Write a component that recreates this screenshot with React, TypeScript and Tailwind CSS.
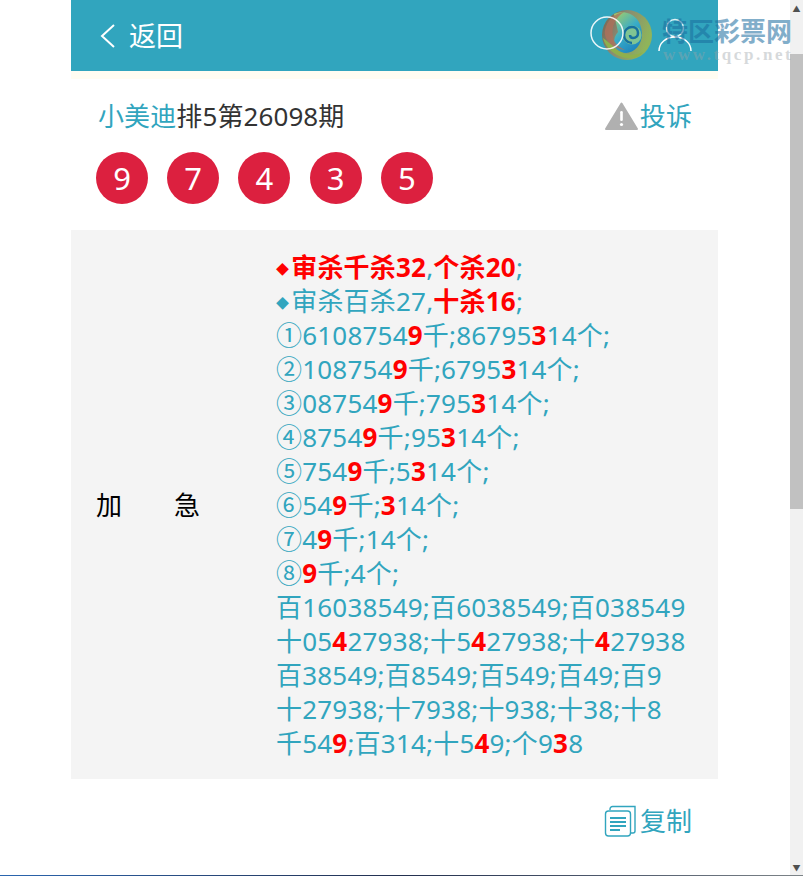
const font = { fontFamily: '"Noto Sans", "Noto Sans CJK SC", sans-serif' };

const R = ({ children }: { children: React.ReactNode }) => (
  <b className="font-bold text-[#ff0000]">{children}</b>
);

const lines: React.ReactNode[] = [
  <>
    <span className="text-[#ff0000] text-[13px] align-[3px] mr-[2px]">◆</span>
    <R>审杀千杀32</R>,<R>个杀20</R>;
  </>,
  <>
    <span className="text-[13px] align-[3px] mr-[2px]">◆</span>审杀百杀27,<R>十杀16</R>;
  </>,
  <>①6108754<R>9</R>千;86795<R>3</R>14个;</>,
  <>②108754<R>9</R>千;6795<R>3</R>14个;</>,
  <>③08754<R>9</R>千;795<R>3</R>14个;</>,
  <>④8754<R>9</R>千;95<R>3</R>14个;</>,
  <>⑤754<R>9</R>千;5<R>3</R>14个;</>,
  <>⑥54<R>9</R>千;<R>3</R>14个;</>,
  <>⑦4<R>9</R>千;14个;</>,
  <>⑧<R>9</R>千;4个;</>,
  <>百16038549;百6038549;百038549</>,
  <>十05<R>4</R>27938;十5<R>4</R>27938;十<R>4</R>27938</>,
  <>百38549;百8549;百549;百49;百9</>,
  <>十27938;十7938;十938;十38;十8</>,
  <>千54<R>9</R>;百314;十5<R>4</R>9;个9<R>3</R>8</>,
];

const Watermark = () => (
  <div className="absolute left-[590px] top-[8px] w-[205px] h-[60px]">
    <svg width="205" height="60" viewBox="0 0 205 60" className="absolute left-0 top-0">
      <defs>
        <linearGradient id="rim" x1="0" y1="0" x2="1" y2="0.4">
          <stop offset="0%" stopColor="#75604f" />
          <stop offset="45%" stopColor="#8a8a72" />
          <stop offset="100%" stopColor="#8fb45a" />
        </linearGradient>
        <linearGradient id="inner" x1="0" y1="0" x2="0.6" y2="1">
          <stop offset="0%" stopColor="#a9cf63" />
          <stop offset="55%" stopColor="#38acc8" />
          <stop offset="100%" stopColor="#1f86bd" />
        </linearGradient>
      </defs>
      <circle cx="37" cy="27" r="25" fill="url(#rim)" />
      <path d="M24 6c14-6 28 4 28 20 0 13-11 22-21 18-8-3-9-14-3-20" fill="url(#inner)" />
      <path d="M13 30c3 12 16 21 28 20 5 0 9-2 12-6-9 5-23 3-31-7z" fill="#8fb04c" />
      <path d="M15 22c2-10 10-17 19-18-8 5-13 14-11 25 1 6 6 10 12 13-10-1-22-9-20-20z" fill="#b0705a" opacity="0.75" />
      <circle cx="42" cy="27" r="9.500" fill="#7fc493" />
      <path d="M42 35c-5 0-8-4-8-8 0-5 4-8 8-8 4 0 6 3 6 6 0 3-2 5-5 5-2 0-3-1-3-3" fill="none" stroke="#16709f" strokeWidth="2.500" />
      <circle cx="17" cy="25" r="16" fill="none" stroke="#ffffff" strokeWidth="1.500" opacity="0.9" />
      <circle cx="85" cy="20" r="8.500" fill="none" stroke="#ffffff" strokeWidth="1.500" opacity="0.85" />
      <path d="M69 43c0-8 7-14 16-14s16 6 16 14" fill="none" stroke="#ffffff" strokeWidth="1.500" />
    </svg>
    <div className="absolute left-[72px] top-[8px] text-[26px] leading-[30px] font-bold text-[#1b6d9f] opacity-55 whitespace-nowrap">
      特区彩票网
    </div>
    <div
      className="absolute left-[73px] top-[37px] text-[17px] leading-[20px] font-bold text-[#9aa3a8] opacity-40 tracking-[2.6px] whitespace-nowrap"
      style={{ fontFamily: '"Liberation Serif", serif' }}
    >
      www.tqcp.net
    </div>
  </div>
);

export default function App() {
  return (
    <div className="relative flex h-[876px] overflow-hidden bg-white" style={font}>
      <main className="flex-1 pl-[71px] pr-[72px]">
        <header className="flex h-[71px] items-center gap-[10px] bg-[#31a5be] pl-[26px] text-white">
          <svg width="22" height="26" viewBox="0 0 22 26" fill="none" stroke="#fff" strokeWidth="2">
            <path d="M17 2 5 13l12 11" />
          </svg>
          <span className="text-[27px] leading-[34px]">返回</span>
        </header>
        <div className="h-[8px] bg-[#fffdf2]" />

        <section className="px-[25px] pt-[20px]">
          <div className="flex items-center justify-between pr-[1px] pl-[2px] text-[26px] leading-[34px] tracking-[0.1px]">
            <div className="text-[#333333]">
              <span className="text-[#31a5be]">小美迪</span>排5第26098期
            </div>
            <div className="flex items-center gap-[2px] text-[#31a5be]">
              <svg width="33" height="28" viewBox="0 0 33 28">
                <path d="M16.5 1.500 32 27H1z" fill="#b0b0b0" stroke="#b0b0b0" strokeWidth="2" strokeLinejoin="round" />
                <rect x="15.200" y="9" width="2.600" height="10" rx="1.300" fill="#fff" />
                <circle cx="16.500" cy="22.500" r="1.600" fill="#fff" />
              </svg>
              投诉
            </div>
          </div>
          <div className="mt-[19px] flex gap-[19.2px]">
            {[9, 7, 4, 3, 5].map((n) => (
              <div
                key={n}
                className="flex h-[52px] w-[52px] items-center justify-center rounded-full bg-[#dc203f] text-[31px] leading-none text-white"
              >
                {n}
              </div>
            ))}
          </div>
        </section>

        <section className="mt-[26px] flex h-[549px] items-center bg-[#f4f4f4]">
          <div className="flex w-[205px] items-center gap-[52px] pl-[25px] text-[26px] leading-[34px] text-black">
            <span>加</span>
            <span>急</span>
          </div>
          <div className="whitespace-nowrap text-[26px] leading-[34px] tracking-[0.2px] text-[#31a5be]">
            {lines.map((line, i) => (
              <div key={i} className="h-[34px]">
                {line}
              </div>
            ))}
          </div>
        </section>

        <div className="mt-[25px] flex items-center justify-end gap-[2px] pr-[26px] text-[26px] leading-[34px] text-[#31a5be]">
          <svg width="34" height="32" viewBox="0 0 34 32" fill="none" stroke="#31a5be" strokeWidth="1.400">
            <path d="M6 5V4a2.500 2.500 0 0 1 2.500-2.500H31V26a2 2 0 0 1-2 2h-2" />
            <rect x="1.500" y="6" width="25" height="25" rx="3" />
            <path d="M6 13h16M6 17h16M6 21h16M6 25h10" strokeWidth="1.800" />
          </svg>
          复制
        </div>
      </main>

      <aside className="flex w-[13px] shrink-0 flex-col bg-[#f1f1f1]">
        <div className="flex h-[17px] items-center justify-center text-[8px] leading-none text-[#505050]">▲</div>
        <div className="h-[37px]" />
        <div className="h-[455px] bg-[#c1c1c1]" />
        <div className="flex-1" />
        <div className="flex h-[17px] items-center justify-center text-[8px] leading-none text-[#505050]">▼</div>
      </aside>

      <Watermark />
      <div className="absolute inset-x-0 bottom-0 h-px bg-gradient-to-r from-[#2a66b0] via-[#23304f] to-[#7d8488]" />
    </div>
  );
}
